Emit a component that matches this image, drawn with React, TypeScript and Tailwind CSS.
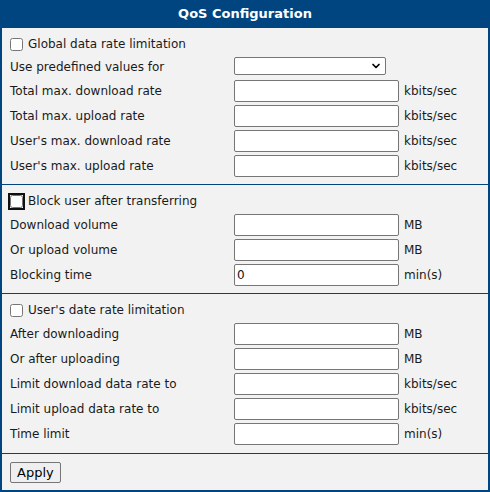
import { ChevronDown } from "lucide-react";

type Row = {
  label: string;
  unit: string;
  value?: string;
};

const globalRows: Row[] = [
  { label: "Total max. download rate", unit: "kbits/sec" },
  { label: "Total max. upload rate", unit: "kbits/sec" },
  { label: "User's max. download rate", unit: "kbits/sec" },
  { label: "User's max. upload rate", unit: "kbits/sec" },
];

const blockRows: Row[] = [
  { label: "Download volume", unit: "MB" },
  { label: "Or upload volume", unit: "MB" },
  { label: "Blocking time", unit: "min(s)", value: "0" },
];

const userRows: Row[] = [
  { label: "After downloading", unit: "MB" },
  { label: "Or after uploading", unit: "MB" },
  { label: "Limit download data rate to", unit: "kbits/sec" },
  { label: "Limit upload data rate to", unit: "kbits/sec" },
  { label: "Time limit", unit: "min(s)" },
];

function CheckRow({ label, focused }: { label: string; focused?: boolean }) {
  return (
    <label className="flex h-[22px] items-center">
      <input
        type="checkbox"
        className={
          "m-0 h-[13px] w-[13px] " +
          (focused ? "outline-2 outline-offset-0 outline-[#101010] rounded-[2px]" : "")
        }
      />
      <span className="ml-[5px]">{label}</span>
    </label>
  );
}

function InputRow({ row }: { row: Row }) {
  return (
    <div className="flex h-[25px] items-center">
      <span className="w-[224px]">{row.label}</span>
      <input
        type="text"
        defaultValue={row.value ?? ""}
        className="h-[22px] w-[165px] rounded-[2px] border border-[#767676] bg-white px-[2px] text-[12px] text-[#111]"
      />
      <span className="ml-[5px]">{row.unit}</span>
    </div>
  );
}

export default function App() {
  return (
    <div
      className="h-[492px] w-[490px] bg-[#f2f2f2] text-[12px] text-[#1a1a1a]"
      style={{ fontFamily: '"DejaVu Sans", Verdana, sans-serif' }}
    >
      <div className="flex h-full flex-col border-x-2 border-b-2 border-[#00457f]">
        <div className="flex h-[28px] shrink-0 items-center justify-center bg-[#00457f] text-[13px] font-bold text-white">
          QoS Configuration
        </div>

        <div className="border-b border-[#00457f] px-[8px] pt-[5px] pb-[6px]">
          <CheckRow label="Global data rate limitation" />
          <div className="flex h-[23px] items-center">
            <span className="w-[224px]">Use predefined values for</span>
            <div className="relative">
              <select className="h-[18px] w-[152px] appearance-none rounded-[2px] border border-[#767676] bg-white" />
              <ChevronDown
                size={12}
                strokeWidth={3.5}
                className="pointer-events-none absolute right-[4px] top-[3px] text-black"
              />
            </div>
          </div>
          {globalRows.map((r) => (
            <InputRow key={r.label} row={r} />
          ))}
        </div>

        <div className="border-b border-[#00457f] px-[8px] pt-[5px] pb-[6px]">
          <CheckRow label="Block user after transferring" focused />
          {blockRows.map((r) => (
            <InputRow key={r.label} row={r} />
          ))}
        </div>

        <div className="border-b border-[#00457f] px-[8px] pt-[5px] pb-[7px]">
          <CheckRow label="User's date rate limitation" />
          {userRows.map((r) => (
            <InputRow key={r.label} row={r} />
          ))}
        </div>

        <div className="flex flex-1 items-center px-[8px]">
          <button className="h-[21px] rounded-[2px] border border-[#767676] bg-[#efefef] px-[6px] text-[13px] text-black">
            Apply
          </button>
        </div>
      </div>
    </div>
  );
}
